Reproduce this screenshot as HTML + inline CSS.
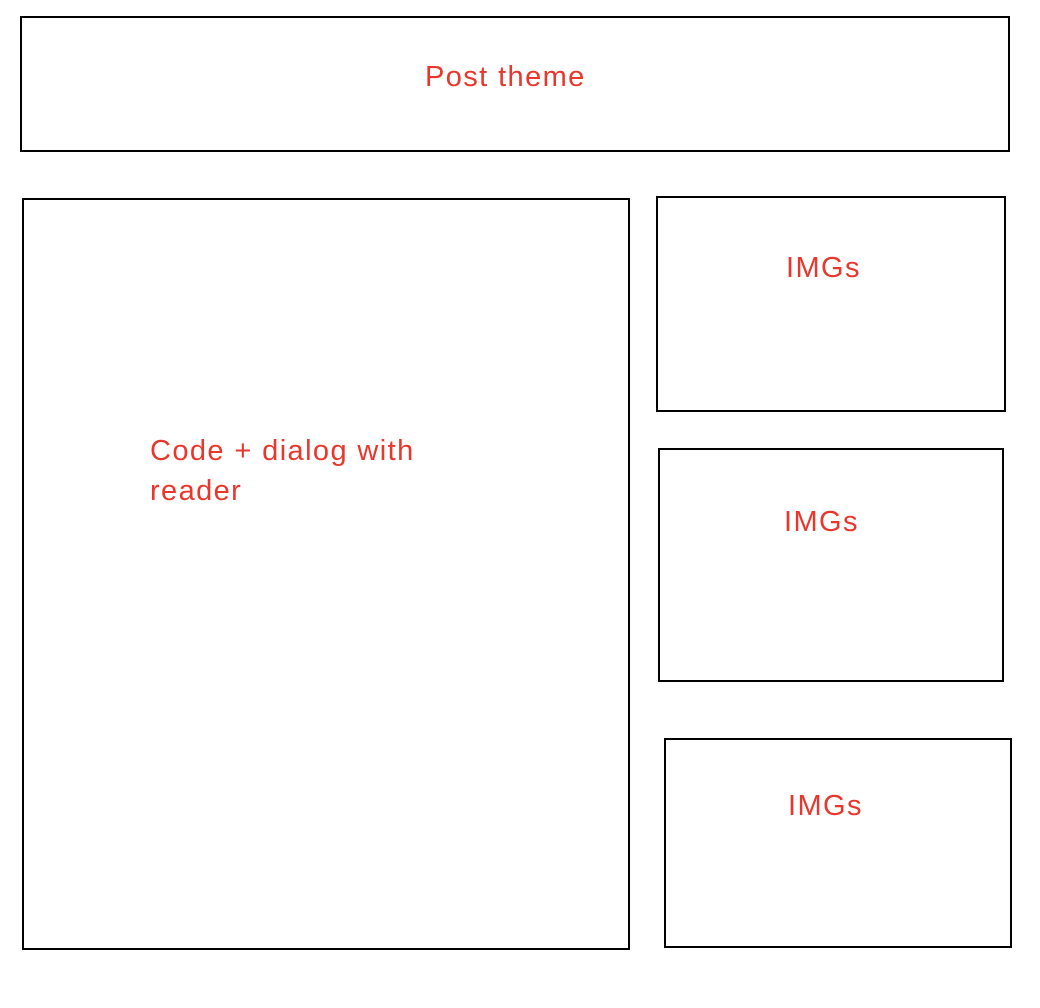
<!DOCTYPE html>
<html><head><meta charset="utf-8"><style>
html,body{margin:0;padding:0;background:#fff;width:1040px;height:1008px;overflow:hidden;position:relative}
.b{position:absolute;border:2px solid #000;box-sizing:border-box}
.t{position:absolute;font-family:"Liberation Sans",Arial,sans-serif;font-size:29px;line-height:40px;letter-spacing:1.4px;color:#e8372c;white-space:nowrap}
</style></head><body>
<div class="b" style="left:20px;top:16px;width:990px;height:136px"></div>
<div class="b" style="left:22px;top:198px;width:608px;height:752px"></div>
<div class="b" style="left:656px;top:196px;width:350px;height:216px"></div>
<div class="b" style="left:658px;top:448px;width:346px;height:234px"></div>
<div class="b" style="left:664px;top:738px;width:348px;height:210px"></div>
<div class="t" style="left:425px;top:57px">Post theme</div>
<div class="t" style="left:150px;top:431px">Code + dialog with<br>reader</div>
<div class="t" style="left:786px;top:248px">IMGs</div>
<div class="t" style="left:784px;top:502px">IMGs</div>
<div class="t" style="left:788px;top:786px">IMGs</div>
</body></html>
